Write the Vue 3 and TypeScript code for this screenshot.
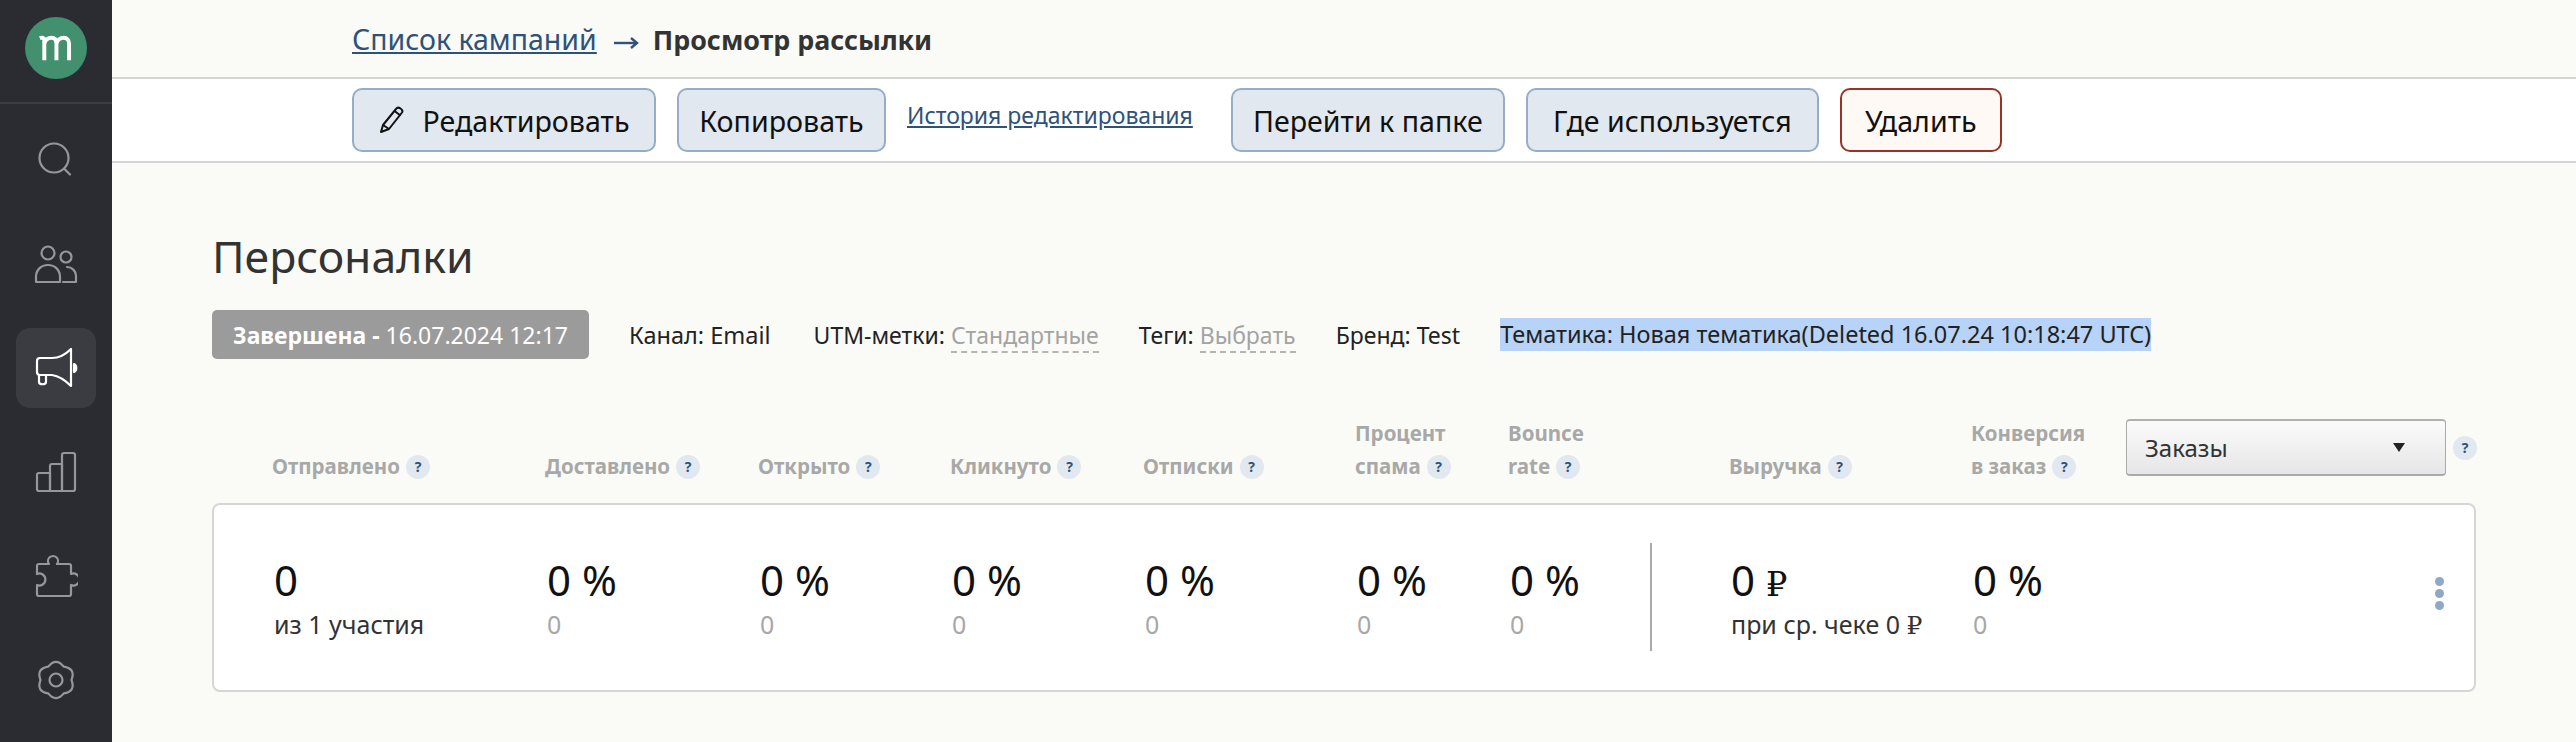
<script setup lang="ts">
const navItems = [
  { key: 'search', active: false },
  { key: 'people', active: false },
  { key: 'campaigns', active: true },
  { key: 'stats', active: false },
  { key: 'addons', active: false },
  { key: 'settings', active: false }
]

// six soft lobes around the middle of the 44 box
function gearPath() {
  let d = ''
  for (let i = 0; i < 6; i++) {
    const peak = (i * 60 - 90) * Math.PI / 180
    const start = peak - Math.PI / 6
    const end = peak + Math.PI / 6
    if (i === 0) d += `M${(22 + 15.5 * Math.cos(start)).toFixed(2)} ${(22 + 15.5 * Math.sin(start)).toFixed(2)}`
    d += `Q${(22 + 23 * Math.cos(peak)).toFixed(2)} ${(22 + 23 * Math.sin(peak)).toFixed(2)} ${(22 + 15.5 * Math.cos(end)).toFixed(2)} ${(22 + 15.5 * Math.sin(end)).toFixed(2)}`
  }
  return d + 'Z'
}
const gear = gearPath()

const metaTail = 'Тематика: Новая тематика(Deleted 16.07.24 10:18:47 UTC)'

const columns = [
  { head: ['Отправлено'], value: '0', unit: '', sub: 'из 1 участия', subUnit: '', dark: true },
  { head: ['Доставлено'], value: '0 %', unit: '', sub: '0', subUnit: '', dark: false },
  { head: ['Открыто'], value: '0 %', unit: '', sub: '0', subUnit: '', dark: false },
  { head: ['Кликнуто'], value: '0 %', unit: '', sub: '0', subUnit: '', dark: false },
  { head: ['Отписки'], value: '0 %', unit: '', sub: '0', subUnit: '', dark: false },
  { head: ['Процент', 'спама'], value: '0 %', unit: '', sub: '0', subUnit: '', dark: false },
  { head: ['Bounce', 'rate'], value: '0 %', unit: '', sub: '0', subUnit: '', dark: false },
  { head: ['Выручка'], value: '0 ', unit: '₽', sub: 'при ср. чеке 0 ', subUnit: '₽', dark: true },
  { head: ['Конверсия', 'в заказ'], value: '0 %', unit: '', sub: '0', subUnit: '', dark: false }
]
</script>

<template>
  <div class="page">
    <aside class="sidebar">
      <div class="logo-box">
        <div class="logo">
          <svg width="38" height="27" viewBox="0 0 38 30" fill="none" stroke="#fff" stroke-width="4.4">
            <path d="M1 3.5c2.5-1 5-.5 5 2.5V28" />
            <path d="M6 9c1.500-4 4.500-6 8-6s5.500 2.500 5.500 6.500V28" />
            <path d="M19.500 9c1.500-4 4.500-6 8-6s6 2.500 6 6.500V28" />
          </svg>
        </div>
      </div>
      <nav class="nav">
        <div v-for="item in navItems" :key="item.key" class="nav-item" :class="{ active: item.active }">
          <svg width="44" height="44" viewBox="0 0 44 44" fill="none" stroke="currentColor" stroke-width="2.200" stroke-linecap="round" stroke-linejoin="round">
            <template v-if="item.key === 'search'">
              <circle cx="20" cy="20" r="14.500" />
              <path d="M30.500 31l5.500 5.500" />
            </template>
            <template v-else-if="item.key === 'people'">
              <circle cx="14" cy="11" r="6.500" />
              <circle cx="32" cy="15" r="5.500" />
              <path d="M2 40v-5c0-7 5-12 12-12s12 5 12 12v5z" />
              <path d="M33 25c5 0 9 4 9 9v6H29" />
            </template>
            <template v-else-if="item.key === 'campaigns'">
              <path d="M3 15c0-2 1-3 3-3h12c7 0 14-4 19-9v37c-5-5-12-10-19-11H6c-2 0-3-1-3-3z" />
              <path d="M5 29v7c0 3 7 3 7 0v-7" />
              <path d="M40 18c3 1 3 7 0 8z" fill="currentColor" />
            </template>
            <template v-else-if="item.key === 'stats'">
              <path d="M3 25c0-1 1-2 2-2h11v18H5c-1 0-2-1-2-2z" />
              <path d="M16 16c0-1 1-2 2-2h10v27H16z" />
              <path d="M28 5c0-1 1-2 2-2h9c1 0 2 1 2 2v34c0 1-1 2-2 2H28z" />
            </template>
            <template v-else-if="item.key === 'addons'">
              <path d="M5 10H15A5 5 0 1 1 23 10H35a2 2 0 0 1 2 2V20A6 6 0 1 1 37 31V40a2 2 0 0 1-2 2H5a2 2 0 0 1-2-2V31A6 6 0 1 0 3 20V12a2 2 0 0 1 2-2z" />
            </template>
            <template v-else>
              <path :d="gear" />
              <circle cx="22" cy="22" r="6.500" />
            </template>
          </svg>
        </div>
      </nav>
    </aside>

    <main class="main">
      <div class="crumbs">
        <a class="crumb-link">Список кампаний</a>
        <svg class="crumb-arrow" width="26" height="14" viewBox="0 0 26 14" fill="none" stroke="#2f5279" stroke-width="2.400">
          <path d="M1 7h23" />
          <path d="M18 2l6 5-6 5" />
        </svg>
        <b class="crumb-current">Просмотр рассылки</b>
      </div>

      <div class="toolbar">
        <button class="btn btn-edit">
          <svg width="26" height="28" viewBox="0 0 26 28" fill="none" stroke="#111" stroke-width="2" stroke-linejoin="round">
            <path d="M2 26l2-7L17 3c1-1.500 3-1.500 4.500-.5S24 5 23 6.500L10 23z" />
            <path d="M4 19l6 4" />
            <path d="M15.500 5l6 4.500" />
          </svg>
          Редактировать
        </button>
        <button class="btn btn-copy">Копировать</button>
        <a class="history-link">История редактирования</a>
        <button class="btn btn-folder">Перейти к папке</button>
        <button class="btn btn-where">Где используется</button>
        <button class="btn btn-danger">Удалить</button>
      </div>

      <section class="content">
        <h1 class="title">Персоналки</h1>

        <div class="meta">
          <div class="status"><b>Завершена -</b> 16.07.2024 12:17</div>
          <span class="meta-item channel">Канал: Email</span>
          <span class="meta-item">UTM-метки: <span class="dashed">Стандартные</span></span>
          <span class="meta-item">Теги: <span class="dashed">Выбрать</span></span>
          <span class="meta-item">Бренд: Test</span>
          <span class="meta-item selected">{{ metaTail }}</span>
        </div>

        <div class="metrics metrics-head">
          <div v-for="col in columns" :key="col.head[0]" class="head-cell">
            <span v-for="(line, i) in col.head" :key="line" class="head-line">
              {{ line }}<i v-if="i === col.head.length - 1" class="hint">?</i>
            </span>
          </div>
          <div class="select-wrap">
            <div class="select">
              <span>Заказы</span>
              <span class="select-arrow" />
            </div>
            <i class="hint hint-select">?</i>
          </div>
        </div>

        <div class="card">
          <div class="metrics">
            <div v-for="col in columns" :key="col.head[0]" class="value-cell">
              <div class="value">{{ col.value }}<span v-if="col.unit" class="rub">{{ col.unit }}</span></div>
              <div class="sub" :class="{ 'sub-dark': col.dark }">{{ col.sub }}<span v-if="col.subUnit" class="rub rub-sub">{{ col.subUnit }}</span></div>
            </div>
          </div>
          <span class="vline" />
          <div class="dots"><span /><span /><span /></div>
        </div>
      </section>
    </main>
  </div>
</template>

<style scoped>
.page {
  display: flex;
  min-height: 742px;
  font-family: "Noto Sans", Roboto, sans-serif;
  color: #222;
}
.sidebar {
  width: 112px;
  flex-shrink: 0;
  background: #2a2c31;
}
.logo-box {
  height: 104px;
  display: flex;
  padding-top: 17px;
  padding-left: 25px;
  box-sizing: border-box;
  border-bottom: 2px solid #3b3d42;
}
.logo {
  width: 62px;
  height: 62px;
  border-radius: 50%;
  background: #43906f;
  display: flex;
  align-items: center;
  justify-content: center;
}
.nav {
  padding: 16px 16px 0;
  display: flex;
  flex-direction: column;
  gap: 24px;
}
.nav-item {
  width: 80px;
  height: 80px;
  border-radius: 14px;
  display: flex;
  align-items: center;
  justify-content: center;
  color: #96979a;
}
.nav-item.active {
  background: #3a3c41;
  color: #fff;
}
.main {
  flex: 1;
  background: #fafbf6;
}
.crumbs {
  height: 77px;
  box-sizing: border-box;
  padding: 20px 0 0 240px;
  display: flex;
  align-items: baseline;
  font-size: 28.500px;
}
.crumb-link {
  color: #2f5279;
  text-decoration: underline;
}
.crumb-arrow {
  margin: 0 14px 0 16px;
}
.crumb-current {
  color: #333;
  font-size: 26.800px;
}
.toolbar {
  height: 86px;
  box-sizing: border-box;
  padding: 9px 0 0 240px;
  background: #fff;
  border-top: 2px solid #d4d4d4;
  border-bottom: 2px solid #d4d4d4;
  display: flex;
  align-items: flex-start;
  gap: 21px;
}
.btn {
  height: 64px;
  box-sizing: border-box;
  padding: 0;
  border: 2px solid #95adc6;
  border-radius: 10px;
  background: #e1e8ef;
  color: #111;
  font: inherit;
  font-size: 28.600px;
  display: flex;
  align-items: center;
  justify-content: center;
  white-space: nowrap;
}
.btn-edit {
  width: 304px;
  gap: 18px;
}
.btn-copy {
  width: 209px;
}
.btn-folder {
  width: 274px;
  margin-left: 17px;
}
.btn-where {
  width: 293px;
}
.btn-danger {
  width: 162px;
  background: #fff9f6;
  border-color: #973426;
}
.history-link {
  color: #2f5279;
  text-decoration: underline;
  font-size: 23px;
  margin-top: 11px;
  white-space: nowrap;
}
.content {
  padding: 0 100px;
}
.title {
  margin: 65px 0 0;
  font-size: 44.500px;
  line-height: 56px;
  font-weight: 400;
  color: #333;
}
.meta {
  margin-top: 26px;
  height: 49px;
  display: flex;
  align-items: center;
  font-size: 23px;
  white-space: nowrap;
}
.status {
  width: 377px;
  height: 49px;
  box-sizing: border-box;
  background: #9b9b9b;
  border-radius: 5px;
  color: #fff;
  display: flex;
  align-items: center;
  justify-content: center;
  gap: 6px;
}
.meta-item {
  margin-left: 40px;
}
.channel {
  font-size: 23.500px;
  margin-right: 3px;
}
.selected {
  background: #b7d3f7;
  font-size: 23.500px;
  line-height: 33px;
}
.dashed {
  color: #a3a3a3;
  border-bottom: 2px dashed #b5b5b5;
}
.metrics {
  display: grid;
  grid-template-columns: 273px 213px 192px 193px 212px 153px 221px 242px 153px;
  padding-left: 60px;
}
.metrics-head {
  position: relative;
  margin-top: 45px;
  height: 79px;
  align-items: end;
}
.head-cell {
  display: flex;
  flex-direction: column;
  font-size: 20.500px;
  font-weight: 700;
  line-height: 33px;
  color: #a8a8a8;
  white-space: nowrap;
}
.hint {
  display: inline-flex;
  align-items: center;
  justify-content: center;
  width: 24px;
  height: 24px;
  margin-left: 6px;
  border-radius: 50%;
  background: #e1e8ef;
  color: #2f5279;
  font-size: 14px;
  font-style: normal;
  font-weight: 700;
  vertical-align: 2px;
}
.select-wrap {
  position: absolute;
  left: 1914px;
  top: 15px;
  display: flex;
  align-items: center;
}
.select {
  width: 320px;
  height: 57px;
  box-sizing: border-box;
  padding: 0 18px;
  border: 1px solid #aaa;
  border-bottom: 2px solid #aaa;
  border-top: 2px solid #b0b0b0;
  border-radius: 4px;
  background: linear-gradient(#fbfbfb, #e6e6e8);
  display: flex;
  align-items: center;
  justify-content: space-between;
  font-size: 24px;
  color: #333;
}
.select-arrow {
  width: 0;
  height: 0;
  border-left: 6px solid transparent;
  border-right: 6px solid transparent;
  border-top: 9px solid #222;
  margin-right: 22px;
}
.hint-select {
  margin-left: 7px;
}
.card {
  position: relative;
  height: 189px;
  box-sizing: border-box;
  margin-top: 20px;
  background: #fff;
  border: 2px solid #d6d6d6;
  border-radius: 8px;
}
.value-cell {
  padding-top: 48px;
  white-space: nowrap;
}
.value {
  font-size: 42px;
  line-height: 54px;
  color: #111;
}
.sub {
  font-size: 25px;
  line-height: 34px;
  color: #a8a8a8;
}
.sub-dark {
  color: #333;
}
.rub {
  font-family: "DejaVu Serif", serif;
  font-size: 0.8em;
  line-height: 0;
}
.rub-sub {
  font-size: 1em;
}
.vline {
  position: absolute;
  left: 1436px;
  top: 38px;
  width: 2px;
  height: 108px;
  background: #aaa;
}
.dots {
  position: absolute;
  right: 30px;
  top: 72px;
  display: flex;
  flex-direction: column;
  gap: 3px;
}
.dots span {
  width: 9px;
  height: 9px;
  border-radius: 50%;
  background: #8fa9c4;
}
</style>
